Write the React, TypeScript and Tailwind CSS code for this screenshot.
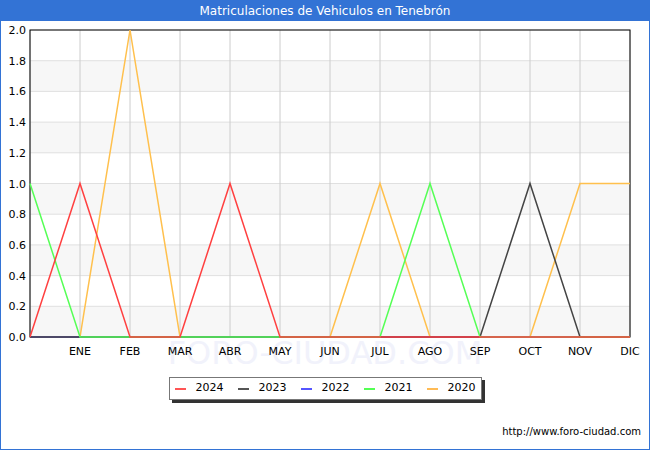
export default function App() {
  const X = (i: number) => 30 + 50 * i;
  const Y = (v: number) => 337 - v * 153.5;
  const series: [string, number[]][] = [
    ["#ffc04d", [0, 0, 2, 0, 0, 0, 0, 1, 0, 0, 0, 1, 1]],
    ["#4040ff", [0, 0, 0, 0, 0, 0, 0, 0, 0, 0, 0, 0, 0]],
    ["#444444", [0, 0, 0, 0, 0, 0, 0, 0, 0, 0, 1, 0, 0]],
    ["#55ff55", [1, 0, 0, 0, 0, 0, 0, 0, 1, 0, 0, 0, 0]],
    ["#ff4040", [0, 1, 0, 0, 1, 0, 0, 0, 0, 0, 0, 0, 0]],
  ];
  const months = ["ENE", "FEB", "MAR", "ABR", "MAY", "JUN", "JUL", "AGO", "SEP", "OCT", "NOV", "DIC"];
  const legend: [string, string][] = [
    ["#ff5555", "2024"],
    ["#555555", "2023"],
    ["#5555ff", "2022"],
    ["#55ff55", "2021"],
    ["#ffbb55", "2020"],
  ];
  return (
    <div className="w-[650px] h-[450px] bg-white border border-[#3373d5] border-t-0 flex flex-col text-black" style={{ fontFamily: '"DejaVu Sans", sans-serif' }}>
      <div className="h-[21px] bg-[#3373d5] text-white text-[12px] flex items-center justify-center -mx-px">Matriculaciones de Vehiculos en Tenebrón</div>
      <svg width="648" height="350" viewBox="1 21 648 350" className="block">
        <text x={325} y={364} textAnchor="middle" fontSize="32" fill="#f1f2fb" fontFamily="DejaVu Sans">FORO-CIUDAD.COM</text>
        {[0, 1, 2, 3, 4, 5, 6, 7, 8, 9].map((k) =>
          k % 2 === 0 ? <rect key={k} x={30} y={Y((k + 1) * 0.2)} width={600} height={30.7} fill="#f7f7f7" /> : null
        )}
        {Array.from({ length: 11 }, (_, k) => (
          <line key={"h" + k} x1={30} x2={630} y1={Y(k * 0.2)} y2={Y(k * 0.2)} stroke="#e0e0e0" />
        ))}
        {Array.from({ length: 13 }, (_, i) => (
          <line key={"v" + i} x1={X(i)} x2={X(i)} y1={30} y2={337} stroke="#cccccc" />
        ))}
        <rect x={30} y={30} width={600} height={307} fill="none" stroke="#000" />
        {series.map(([c, d]) => (
          <polyline key={c} points={d.map((v, i) => `${X(i)},${Y(v)}`).join(" ")} fill="none" stroke={c} strokeWidth={1.5} />
        ))}
        {Array.from({ length: 11 }, (_, k) => (
          <text key={"yl" + k} x={26} y={Y(k * 0.2) + 4} textAnchor="end" fontSize="11" fill="#000">{(k * 0.2).toFixed(1)}</text>
        ))}
        {months.map((m, i) => (
          <text key={m} x={X(i + 1)} y={355} textAnchor="middle" fontSize="11" fill="#000">{m}</text>
        ))}
      </svg>
      <div className="flex justify-center mt-[6px]">
        <div className="h-[23px] border border-[#777] bg-white shadow-[3px_3px_0_#333] flex items-center gap-[14px] px-[5px] text-[11px]">
          {legend.map(([c, t]) => (
            <div key={t} className="flex items-center gap-[10px]">
              <span className="w-[11px] h-[2px]" style={{ background: c }} />
              <span>{t}</span>
            </div>
          ))}
        </div>
      </div>
      <div className="mt-auto mb-[10px] mr-[8px] text-right text-[10px]">http://www.foro-ciudad.com</div>
    </div>
  );
}
